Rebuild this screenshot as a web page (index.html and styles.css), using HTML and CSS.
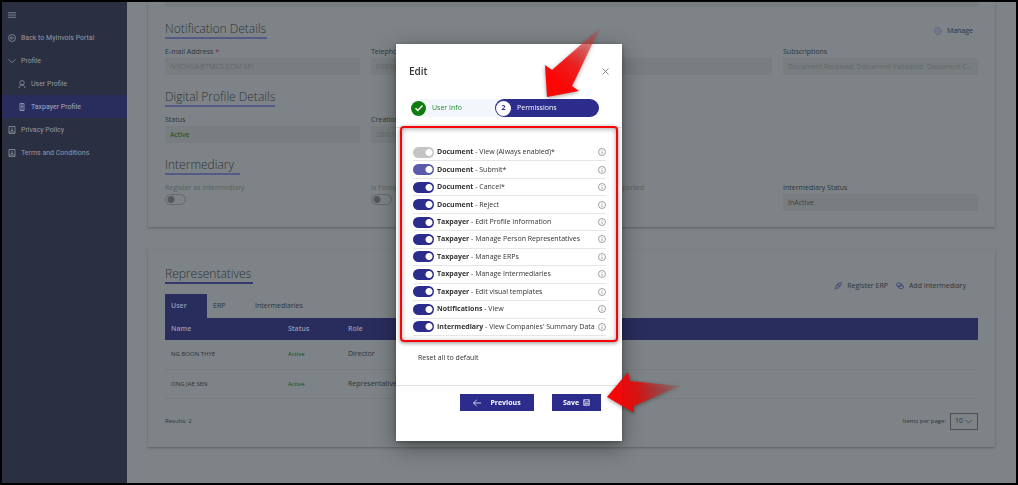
FILE: index.html
```html
<!DOCTYPE html>
<html lang="en">
<head>
<meta charset="utf-8">
<title>Taxpayer Profile</title>
<link rel="stylesheet" href="styles.css">
</head>
<body>
<div class="app">
  <nav class="sidebar">
    <button class="nav-item nav-menu" type="button" aria-label="Menu"><svg class="icon" viewBox="0 0 16 16"><path d="M0 3.500h16M0 8h16M0 12.500h16"/></svg></button>
    <a class="nav-item" href="#"><svg class="icon" viewBox="0 0 16 16"><circle cx="8" cy="8" r="7"/><path d="M12 8H5M8 4.500L4.500 8 8 11.500"/></svg>Back to MyInvois Portal</a>
    <a class="nav-item" href="#"><svg class="icon" viewBox="0 0 16 16"><path d="M1 4.500l7 7 7-7"/></svg>Profile</a>
    <a class="nav-item nav-sub" href="#"><svg class="icon" viewBox="0 0 16 16"><circle cx="8" cy="5.500" r="4.500"/><path d="M2 16c0-8 12-8 12 0"/></svg>User Profile</a>
    <a class="nav-item nav-sub active" href="#"><svg class="icon" viewBox="0 0 16 16"><path d="M4 1h8v14H4zM6 4h4M6 7h4M6 10h4M8 12v3"/></svg>Taxpayer Profile</a>
    <a class="nav-item" href="#"><svg class="icon" viewBox="0 0 16 16"><path d="M2 1h12v14H2zM2 12h12M8 3v6M6 9h4"/></svg>Privacy Policy</a>
    <a class="nav-item" href="#"><svg class="icon" viewBox="0 0 16 16"><path d="M2 1h12v14H2zM2 12h12M8 3v6M6 9h4"/></svg>Terms and Conditions</a>
  </nav>
  <main class="content">
    <section class="card card-profile">
      <div class="strip"></div>
      <div class="head"><h2 class="title w-notification">Notification Details</h2>
        <button class="action action-manage" type="button"><svg class="icon" viewBox="0 0 16 16"><circle cx="8" cy="8" r="6.500" stroke-width="2" stroke-dasharray="3 1"/><circle cx="8" cy="8" r="2.500"/></svg>Manage</button></div>
      <div class="fields">
        <div class="field"><label for="email">E-mail Address <span class="req">*</span></label><input id="email" value="IVYCHUA@TMCS.COM.MY" disabled></div>
        <div class="field"><label for="tel">Telephone</label><input id="tel" value="03806" disabled></div>
        <div class="field"><label for="lang">Language</label><input id="lang" disabled></div>
        <div class="field"><label for="subs">Subscriptions</label><input id="subs" value="Document Received, Document Validated, Document Cancelled" disabled></div>
      </div>
      <div class="head"><h2 class="title w-digital">Digital Profile Details</h2></div>
      <div class="fields">
        <div class="field"><label for="status">Status</label><input id="status" class="ok" value="Active" disabled></div>
        <div class="field"><label for="created">Creation</label><input id="created" value="28/07/" disabled></div>
      </div>
      <div class="head"><h2 class="title w-intermediary">Intermediary</h2></div>
      <div class="fields">
        <div class="field muted"><label for="reg">Register as Intermediary</label><input id="reg" type="checkbox" class="switch" disabled></div>
        <div class="field muted"><label for="foreign">Is Foreign</label><input id="foreign" type="checkbox" class="switch" disabled></div>
        <div class="field muted"><label for="support">Is ERP file supported</label><input id="support" type="checkbox" class="switch" disabled></div>
        <div class="field"><label for="istatus">Intermediary Status</label><input id="istatus" class="dark" value="InActive" disabled></div>
      </div>
    </section>
    <section class="card card-reps">
      <div class="head head-reps"><h2 class="title w-reps">Representatives</h2>
        <div class="actions">
          <button class="action" type="button"><svg class="icon" viewBox="0 0 16 16"><path d="M1 15l3-3M4 12c-2-4 2-7 4-8l4 4c-1 3-5 6-8 4M8 4c2-3 5-3 6-2s1 4-2 6M14 2l1.500-1.500M6 6l4 4"/></svg>Register ERP</button>
          <button class="action" type="button"><svg class="icon" viewBox="0 0 16 16"><rect x="1" y="2" width="10" height="7" rx="3.500"/><rect x="5" y="6" width="10" height="7" rx="3.500"/></svg>Add Intermediary</button>
        </div></div>
      <div class="tabs" role="tablist">
        <button class="tab selected" role="tab" type="button" aria-selected="true">User</button>
        <button class="tab" role="tab" type="button">ERP</button>
        <button class="tab" role="tab" type="button">Intermediaries</button>
      </div>
      <table class="reps">
        <thead><tr><th class="c-name">Name</th><th class="c-status">Status</th><th>Role</th></tr></thead>
        <tbody>
          <tr><td class="small">NG BOON THYE</td><td class="small ok">Active</td><td>Director</td></tr>
          <tr><td class="small">ONG JAE SEN</td><td class="small ok">Active</td><td>Representative</td></tr>
        </tbody>
      </table>
      <div class="pager"><span>Results: 2</span><span class="per-page"><label for="per">Items per page:</label><span class="select-wrap"><select id="per"><option>10</option></select><svg class="chevron" viewBox="0 0 16 16"><path d="M1 4.500l7 7 7-7"/></svg></span></span></div>
    </section>
  </main>
</div>

<div class="overlay">
  <div class="modal" role="dialog" aria-labelledby="edit-title">
    <header class="modal-head">
      <div class="modal-title"><h1 id="edit-title">Edit</h1><button class="close" type="button" aria-label="Close"><svg class="icon" viewBox="0 0 16 16"><path d="M1 1l14 14M15 1L1 15"/></svg></button></div>
      <ol class="steps">
        <li class="step done"><span class="dot"><svg class="icon" viewBox="0 0 16 16"><path d="M1 8.500l4.500 4.500L15 3"/></svg></span>User Info</li>
        <li class="step current"><span class="dot">2</span>Permissions</li>
      </ol>
    </header>
    <ul class="perms">
      <li class="perm"><input class="toggle locked" type="checkbox" id="p1" checked disabled><label for="p1"><b>Document</b> - View (Always enabled)*</label><svg class="info" viewBox="0 0 16 16"><circle cx="8" cy="8" r="7"/><path d="M8 7v5M8 4v1.500"/></svg></li>
      <li class="perm"><input class="toggle soft" type="checkbox" id="p2" checked><label for="p2"><b>Document</b> - Submit*</label><svg class="info" viewBox="0 0 16 16"><circle cx="8" cy="8" r="7"/><path d="M8 7v5M8 4v1.500"/></svg></li>
      <li class="perm"><input class="toggle" type="checkbox" id="p3" checked><label for="p3"><b>Document</b> - Cancel*</label><svg class="info" viewBox="0 0 16 16"><circle cx="8" cy="8" r="7"/><path d="M8 7v5M8 4v1.500"/></svg></li>
      <li class="perm"><input class="toggle" type="checkbox" id="p4" checked><label for="p4"><b>Document</b> - Reject</label><svg class="info" viewBox="0 0 16 16"><circle cx="8" cy="8" r="7"/><path d="M8 7v5M8 4v1.500"/></svg></li>
      <li class="perm"><input class="toggle" type="checkbox" id="p5" checked><label for="p5"><b>Taxpayer</b> - Edit Profile Information</label><svg class="info" viewBox="0 0 16 16"><circle cx="8" cy="8" r="7"/><path d="M8 7v5M8 4v1.500"/></svg></li>
      <li class="perm"><input class="toggle" type="checkbox" id="p6" checked><label for="p6"><b>Taxpayer</b> - Manage Person Representatives</label><svg class="info" viewBox="0 0 16 16"><circle cx="8" cy="8" r="7"/><path d="M8 7v5M8 4v1.500"/></svg></li>
      <li class="perm"><input class="toggle" type="checkbox" id="p7" checked><label for="p7"><b>Taxpayer</b> - Manage ERPs</label><svg class="info" viewBox="0 0 16 16"><circle cx="8" cy="8" r="7"/><path d="M8 7v5M8 4v1.500"/></svg></li>
      <li class="perm"><input class="toggle" type="checkbox" id="p8" checked><label for="p8"><b>Taxpayer</b> - Manage Intermediaries</label><svg class="info" viewBox="0 0 16 16"><circle cx="8" cy="8" r="7"/><path d="M8 7v5M8 4v1.500"/></svg></li>
      <li class="perm"><input class="toggle" type="checkbox" id="p9" checked><label for="p9"><b>Taxpayer</b> - Edit visual templates</label><svg class="info" viewBox="0 0 16 16"><circle cx="8" cy="8" r="7"/><path d="M8 7v5M8 4v1.500"/></svg></li>
      <li class="perm"><input class="toggle" type="checkbox" id="p10" checked><label for="p10"><b>Notifications</b> - View</label><svg class="info" viewBox="0 0 16 16"><circle cx="8" cy="8" r="7"/><path d="M8 7v5M8 4v1.500"/></svg></li>
      <li class="perm"><input class="toggle" type="checkbox" id="p11" checked><label for="p11"><b>Intermediary</b> - View Companies' Summary Data</label><svg class="info" viewBox="0 0 16 16"><circle cx="8" cy="8" r="7"/><path d="M8 7v5M8 4v1.500"/></svg></li>
    </ul>
    <div class="reset-row"><button class="reset" type="button">Reset all to default</button></div>
    <footer class="modal-foot">
      <button class="btn btn-prev" type="button"><svg class="icon" viewBox="0 0 16 16"><path d="M16 8H1M7.500 1.500L1 8l6.500 6.500"/></svg>Previous</button>
      <button class="btn btn-save" type="button">Save<svg class="icon" viewBox="0 0 16 16"><path d="M1.500 1.500h13v13h-13zM4 2v5h8V2M4 14v-4h8v4M7 11v3"/></svg></button>
    </footer>
    <svg class="arrow arrow-top" viewBox="0 0 60 76">
      <defs><linearGradient id="g1" gradientUnits="userSpaceOnUse" x1="14" y1="56" x2="57" y2="5"><stop offset="0" stop-color="#fb0505"/><stop offset=".35" stop-color="#f01818" stop-opacity=".95"/><stop offset="1" stop-color="#c83c3c" stop-opacity=".3"/></linearGradient></defs>
      <path fill="url(#g1)" d="M6 73L4 41l7 5L59 4 31 62l7 5z"/>
    </svg>
    <svg class="arrow arrow-save" viewBox="0 0 80 50">
      <defs><linearGradient id="g2" gradientUnits="userSpaceOnUse" x1="4" y1="28" x2="76" y2="18"><stop offset="0" stop-color="#ff0000"/><stop offset=".4" stop-color="#dc1010" stop-opacity=".95"/><stop offset="1" stop-color="#b43c3c" stop-opacity=".25"/></linearGradient></defs>
      <path fill="url(#g2)" d="M3 29L24 4l2 9 50 5-46 20v7z"/>
    </svg>
  </div>
</div>
</body>
</html>
```
FILE: styles.css
```css
* { box-sizing: border-box; }
body {
  margin: 0;
  font: 7px/12px "Open Sans", "Noto Sans", sans-serif;
  color: #2e3439;
}
h1, h2, ul, ol { margin: 0; padding: 0; font-weight: 400; }
ul, ol { list-style: none; }
button, input, select { font: inherit; color: inherit; margin: 0; padding: 0; border: 0; background: none; }
a { color: inherit; text-decoration: none; }
svg { fill: none; stroke: currentColor; stroke-width: 1.5; }
.icon { width: 8px; height: 8px; flex: none; }

/* Page shell, dimmed behind the dialog */
.app {
  display: flex;
  min-height: 100vh;
  border: 2px solid #000;
  background: #7d8386;
}
.sidebar {
  flex: 0 0 125px;
  padding-top: 1px;
  background: #2a2f42;
  color: #9799a0;
  font-family: Roboto, "Open Sans", sans-serif;
}
.nav-item { display: flex; align-items: center; gap: 5px; width: 100%; height: 23px; padding-left: 6px; }
.nav-sub { padding-left: 16px; }
.active { background: #292d5d; color: #a8aac0; }
.content { flex: 1; min-width: 0; padding: 0 21px 35px; }
.card { padding: 0 17px; box-shadow: 0 1px 2px #5d6265; }
.card-profile { padding-bottom: 16px; }
.card-reps { margin-top: 22px; padding-top: 16px; padding-bottom: 17px; }
.strip { height: 5px; margin-bottom: 13px; background: #787d80; }
.head { display: flex; justify-content: space-between; align-items: flex-end; height: 19px; margin-bottom: 7px; }
.title {
  font-size: 12px;
  line-height: 17px;
  font-weight: 300;
  border-bottom: 2px solid #535a88;
  white-space: nowrap;
}
.w-notification { width: 102px; }
.w-digital { width: 110px; }
.w-intermediary { width: 75px; }
.w-reps { width: 88px; border-color: #343a6c; }
.action { display: flex; align-items: center; gap: 5px; line-height: 17px; }
.action .icon { color: #353a78; }
.action-manage { margin-right: 5px; }
.action-manage .icon { color: #50558a; stroke-width: 1; }
.fields { display: grid; grid-template-columns: repeat(4, 1fr); gap: 11px; margin-bottom: 13px; }
.fields:last-child { margin-bottom: 0; }
.field { display: flex; flex-direction: column; min-width: 0; height: 29px; }
.field input:not(.switch) {
  height: 17px;
  padding: 0 5px;
  background: #787d80;
  color: #62686b;
  text-overflow: ellipsis;
}
.field input.dark:disabled { color: #3c4246; }
.field input.ok:disabled, .ok { color: #12501d; }
.muted { color: #5a5f63; }
.req { color: #8a1c22; }
.switch {
  appearance: none;
  width: 21px;
  height: 11px;
  border: 1px solid #63686c;
  border-radius: 6px;
  background: radial-gradient(circle at 5px 50%, #53585b 3px, transparent 4px);
}

.head-reps { height: 29px; margin: 0; align-items: flex-start; }
.actions { display: flex; gap: 8px; margin-right: 12px; align-self: flex-end; }
.tabs { display: flex; }
.tab { min-width: 42px; height: 24px; padding: 0 6px; text-align: left; }
.selected { background: #292d5d; color: #9a9cb0; font-weight: 600; }
.reps { width: 100%; table-layout: fixed; border-collapse: collapse; }
.reps th { height: 22px; padding: 0 6px; text-align: left; font-weight: 600; background: #292d5d; color: #989bae; }
.reps td { height: 29px; padding: 0 6px; border-bottom: 1px solid #767c7f; }
.reps .small { font-size: 6px; }
.c-name { width: 117px; }
.c-status { width: 60px; }
.pager { display: flex; justify-content: space-between; align-items: center; margin-top: 14px; font-size: 6px; }
.per-page { display: flex; align-items: center; gap: 4px; }
.select-wrap { display: grid; width: 28px; height: 17px; border: 1px solid #4b5053; align-items: center; font-size: 7px; }
.select-wrap > * { grid-area: 1 / 1; }
.select-wrap select { appearance: none; width: 100%; padding-left: 4px; }
.chevron { width: 7px; height: 7px; justify-self: end; margin-right: 5px; pointer-events: none; }

/* Dialog */
.overlay { position: fixed; inset: 0; display: flex; align-items: center; justify-content: center; }
.modal {
  position: relative;
  width: 226px;
  background: #fff;
  color: #333;
  box-shadow: 0 6px 20px rgba(0, 0, 0, .4), 0 1px 4px rgba(0, 0, 0, .3);
}
.modal-head { padding: 18px 13px 10px; border-bottom: 1px solid #e4e4e4; }
.modal-title { display: flex; justify-content: space-between; align-items: center; margin-bottom: 19px; }
.modal-title h1 { font-size: 10px; line-height: 18px; font-weight: 600; }
.close { display: flex; color: #555; }
.close .icon { width: 7px; height: 7px; }
.steps { display: flex; margin: 0 10px 0 2px; border-radius: 9px; background: #f3f7fb; }
.step { display: flex; align-items: center; gap: 6px; height: 18px; border-radius: 9px; }
.done { flex: 1; color: #26893a; }
.current { width: 104px; background: #2b2c8c; color: #fff; }
.dot { display: flex; align-items: center; justify-content: center; width: 15px; height: 15px; border-radius: 50%; }
.done .dot { background: #107c10; color: #fff; }
.done .icon { stroke-width: 3; }
.current .dot { margin-left: 1px; background: #fff; color: #2b2c8c; font-weight: 700; }
.perms {
  position: relative;
  display: grid;
  grid-auto-rows: 1fr;
  min-height: 216px;
  margin: -2px 4px 0;
  padding: 16px 10px 4px 11px;
  border: 2px solid #f60509;
  border-radius: 4px;
  box-shadow: 0 1px 4px rgba(0, 0, 0, .45), inset 0 1px 5px rgba(0, 0, 0, .35);
}
.perm { display: flex; align-items: center; gap: 3px; border-bottom: 1px solid #e6e6e6; white-space: nowrap; }
.perm label { flex: 1; min-width: 0; }
.perm b { font-weight: 700; }
.info { width: 8px; height: 8px; flex: none; color: #666; stroke-width: 1.2; }
.toggle {
  appearance: none;
  width: 21px;
  height: 11px;
  border-radius: 6px;
  background: radial-gradient(circle at 16px 50%, #fff 3px, transparent 4px) #2b2c8c;
}
.soft { background-color: #5a5cab; }
.locked { background-color: #c4c4c4; }
.reset-row { padding: 10px 22px 21px; }
.reset { display: block; line-height: 12px; }
.modal-foot { display: flex; justify-content: flex-end; gap: 18px; padding: 8px 21px 30px; border-top: 1px solid #e0e0e0; }
.btn { display: flex; align-items: center; justify-content: center; height: 17px; background: #2b2c8c; color: #fff; font-weight: 700; }
.btn-prev { width: 74px; gap: 9px; }
.btn-save { width: 49px; gap: 4px; }
.btn-save .icon { width: 7px; height: 7px; }

/* Callout arrows lying over the dialog */
.arrow { position: absolute; stroke: none; pointer-events: none; filter: drop-shadow(0 1px 2px rgba(0, 0, 0, .4)); }
.arrow-top { left: 145px; top: -20px; width: 60px; height: 76px; }
.arrow-save { left: 208px; top: 324px; width: 80px; height: 50px; }
```
